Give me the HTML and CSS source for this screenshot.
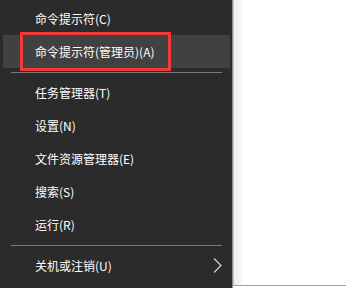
FILE: index.html
```html
<!DOCTYPE html>
<html lang="zh-CN">
<head>
<meta charset="utf-8">
<link rel="stylesheet" href="styles.css">
</head>
<body>
<div class="screen">
  <div class="menu">
    <div class="item">命令提示符(C)</div>
    <div class="item active">命令提示符(管理员)(A)</div>
    <div class="sep"></div>
    <div class="item">任务管理器(T)</div>
    <div class="item">设置(N)</div>
    <div class="item">文件资源管理器(E)</div>
    <div class="item">搜索(S)</div>
    <div class="item">运行(R)</div>
    <div class="sep"></div>
    <div class="item sub"><span>关机或注销(U)</span>
      <svg class="chev" width="9" height="15" viewBox="0 0 9 15"><path d="M1 0.5 L8 7.5 L1 14.5" fill="none" stroke="#d6dbe0" stroke-width="1.1"/></svg>
    </div>
    <div class="mark"></div>
  </div>
  <div class="pane">
    <div class="pane-inner"></div>
  </div>
</div>
</body>
</html>
```

FILE: styles.css
```css
html, body {
  margin: 0;
  padding: 0;
  background: #ffffff;
}
.screen {
  display: flex;
  width: 346px;
  height: 288px;
  overflow: hidden;
}
.menu {
  position: relative;
  width: 227px;
  height: 288px;
  background: #2b2b2b;
  padding: 2px 2px 0 3px;
  flex-shrink: 0;
  font-family: "Noto Sans CJK SC", "Microsoft YaHei", sans-serif;
  font-size: 12px;
  color: #ffffff;
}
.item {
  height: 33px;
  line-height: 33px;
  padding-left: 32px;
  display: flex;
  align-items: center;
  white-space: nowrap;
}
.item.active {
  background: #414141;
}
.item.sub {
  justify-content: space-between;
  padding-right: 8px;
}
.chev {
  display: block;
  margin-top: -1px;
}
.sep {
  height: 1px;
  background: #7a7a7a;
  margin: 4px 8px 3px 8px;
}
.mark {
  position: absolute;
  left: 20px;
  top: 32px;
  width: 145px;
  height: 33px;
  border: 3px solid #f23a3a;
}
.pane {
  flex: 1;
  height: 288px;
  border-left: 1px solid #8a8a8a;
  background: #ffffff;
  display: flex;
  flex-direction: column;
}
.pane-inner {
  height: 285px;
  border-left: 1px solid #c4c4c4;
  border-bottom: 1px solid #a0a0a0;
  background: linear-gradient(to right, #ededed 0px, #f3f3f3 6px, #ffffff 9px, #ffffff 100%);
}
```
